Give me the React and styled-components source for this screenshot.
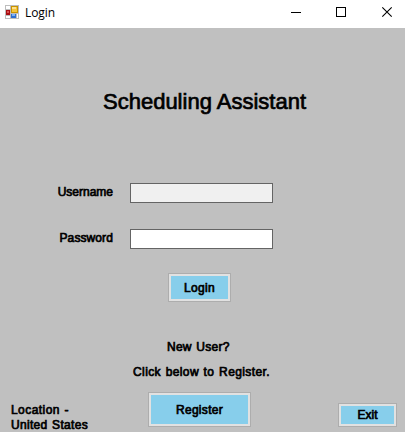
import React from "react";
import styled, { createGlobalStyle } from "styled-components";

const GlobalStyle = createGlobalStyle`
  * { box-sizing: border-box; }
  body { margin: 0; background: #c0c0c0; overflow: hidden; }
`;

const Window = styled.div`
  width: 405px;
  height: 432px;
  display: flex;
  flex-direction: column;
  background: #c0c0c0;
  color: #000;
  font-family: "Liberation Sans", Arial, sans-serif;
  font-size: 12px;
  line-height: 15px;
`;

const TitleBar = styled.header`
  height: 28px;
  flex: none;
  display: flex;
  background: #fff;
  padding-left: 5px;

  > svg { flex: none; }
`;

const AppIcon = styled.svg`
  width: 14px;
  height: 14px;
  margin-top: 5px;
`;

const Caption = styled.span`
  flex: 1;
  margin-left: 6px;
  font: 12px/16px "Open Sans", sans-serif;
  letter-spacing: -0.1px;
  padding-top: 5px;
`;

const Controls = styled.svg`
  width: 130px;
  height: 28px;
  fill: none;
  stroke: #000;
`;

const Title = styled.h1`
  margin: 61px 0 0 103px;
  font-size: 22px;
  font-weight: 400;
  line-height: 26px;
  -webkit-text-stroke: 0.7px #000;
  white-space: nowrap;
`;

const Text = styled.span`
  display: block;
  white-space: nowrap;
  letter-spacing: ${(p) => p.$spacing || 0}px;
  word-spacing: ${(p) => p.$gap || 0}px;
  -webkit-text-stroke: 0.7px #000;
`;

const Fields = styled.form`
  display: grid;
  grid-template-columns: 113px 143px;
  column-gap: 17px;
  row-gap: 26px;
  margin-top: 68px;
`;

const Label = styled.label`
  justify-self: end;
  padding-top: 2px;
`;

const Input = styled.input`
  width: 143px;
  height: 20px;
  border: 1px solid #646464;
  border-radius: 0;
  outline: none;
  padding: 0 3px;
  background: ${(p) => (p.$muted ? "#f0f0f0" : "#fff")};
`;

const Button = styled.button`
  width: ${(p) => p.$w}px;
  height: ${(p) => p.$h}px;
  flex: none;
  display: flex;
  align-items: center;
  justify-content: center;
  padding: ${(p) => p.$drop || 0}px 0 0;
  border: 1px solid #adadad;
  box-shadow: inset 0 0 0 2px #e1e1e1;
  background: #87ceeb;
  color: #000;
  font: inherit;
`;

const LoginRow = styled.div`
  margin: 24px 0 0 168px;
`;

const Prompt = styled.div`
  display: grid;
  row-gap: 10px;
  margin: 38px 0 0 133px;
`;

const NewUser = styled.div`
  padding-left: 34px;
`;

const Footer = styled.footer`
  display: flex;
  align-items: flex-start;
  margin-top: 12px;
`;

const Location = styled.div`
  width: 148px;
  padding: 11px 0 0 11px;
`;

const ExitSlot = styled.div`
  margin: 11px 0 0 87px;
`;

export default function App() {
  return (
    <Window>
      <GlobalStyle />
      <TitleBar>
        <AppIcon viewBox="0 0 14 14" shapeRendering="crispEdges">
          <path d="M0 0h14v14H0z" fill="#bdbdbd" />
          <path d="M1 1h4v3H1zM1 11h4v2H1zM12 9h1v4h-1z" fill="#fff" />
          <path d="M6 1h7v7H6z" fill="#c99400" />
          <path d="M7 2h5v5H7z" fill="#f5c53b" />
          <path d="M7 2h4v2H7z" fill="#ffe18b" />
          <path d="M1 5h4v5H1z" fill="#a90e12" />
          <path d="M2 6h2v2H2z" fill="#d95050" />
          <path d="M6 9h5v4H6z" fill="#2f6fd0" />
          <path d="M7 9h3v2H7z" fill="#7fb2f4" />
        </AppIcon>
        <Caption>Login</Caption>
        <Controls viewBox="275 0 130 28">
          <path d="M291 12.5h10M336.5 7.5h9v9h-9z" shapeRendering="crispEdges" />
          <path d="M382.3 7.3l9.4 9.4M391.7 7.3l-9.4 9.4" strokeWidth="1.1" />
        </Controls>
      </TitleBar>
      <Title>Scheduling Assistant</Title>
      <Fields>
        <Label htmlFor="username"><Text>Username</Text></Label>
        <Input id="username" $muted />
        <Label htmlFor="password"><Text $spacing={0.1}>Password</Text></Label>
        <Input id="password" type="password" />
      </Fields>
      <LoginRow>
        <Button $w={63} $h={29} $drop={2}><Text $spacing={0.3}>Login</Text></Button>
      </LoginRow>
      <Prompt>
        <NewUser><Text $spacing={0.25} $gap={1}>New User?</Text></NewUser>
        <Text $spacing={0.4} $gap={0.9}>Click below to Register.</Text>
      </Prompt>
      <Footer>
        <Location>
          <Text $spacing={0.45} $gap={0.8}>Location -</Text>
          <Text $spacing={0.3} $gap={1}>United States</Text>
        </Location>
        <Button $w={103} $h={35} $drop={2}><Text $spacing={0.3}>Register</Text></Button>
        <ExitSlot>
          <Button $w={59} $h={24}><Text>Exit</Text></Button>
        </ExitSlot>
      </Footer>
    </Window>
  );
}
